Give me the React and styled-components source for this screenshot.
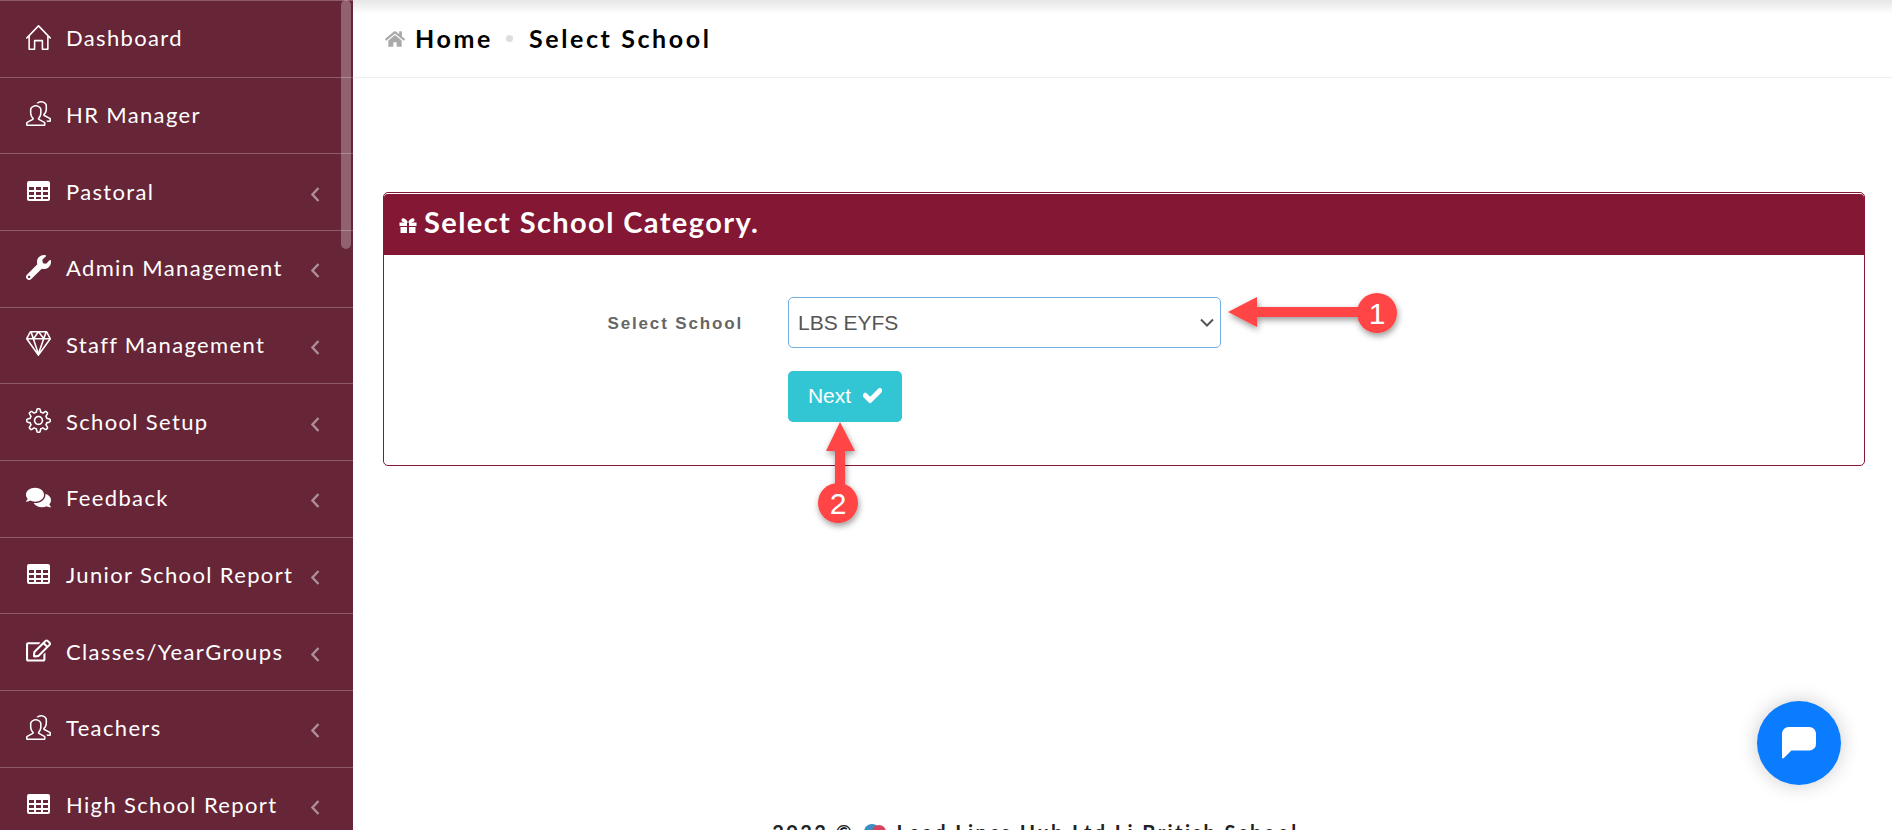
import React from "react";
import styled, { createGlobalStyle } from "styled-components";
import { FaWrench, FaRegEdit, FaComments, FaHome, FaCheck } from "react-icons/fa";
import { SlHome, SlPeople, SlDiamond, SlSettings } from "react-icons/sl";

const GlobalStyle = createGlobalStyle`
  html, body {
    margin: 0;
    height: 100%;
    overflow: hidden;
    background: #fff;
    font-family: "Lato", "Liberation Sans", sans-serif;
  }
  * { box-sizing: border-box; }
`;

const Page = styled.div`
  display: flex;
  height: 830px;
  width: 1892px;
  overflow: hidden;
`;

const Sidebar = styled.nav`
  position: relative;
  flex: 0 0 353px;
  height: 830px;
  overflow: hidden;
  background: #672538;
`;

const ScrollThumb = styled.div`
  position: absolute;
  top: 0;
  right: 2px;
  width: 10px;
  height: 249px;
  border-radius: 5px;
  background: rgba(255, 255, 255, 0.28);
`;

const MenuRow = styled.a`
  display: flex;
  align-items: center;
  height: 76.67px;
  padding: 0 33px 0 25px;
  border-top: 1px solid rgba(255, 255, 255, 0.25);
  color: #fff;
  font-size: 22px;
  letter-spacing: 1.35px;
  white-space: nowrap;
`;

const MenuIcon = styled.span`
  display: inline-flex;
  justify-content: center;
  flex: 0 0 26px;
  margin: -3px 15px 0 0;
  font-size: 25px;
`;

const MenuLabel = styled.span`
  flex: 1;
  margin-top: -2px;
`;

const Caret = styled.svg`
  width: 9px;
  height: 15px;
  margin-top: 4px;
  fill: none;
  stroke: #ab8e97;
  stroke-width: 2.4;
`;

const Main = styled.main`
  flex: 1;
  display: flex;
  flex-direction: column;
  min-width: 0;
  height: 830px;
  overflow: hidden;
`;

const TopBar = styled.header`
  flex: 0 0 78px;
  display: flex;
  align-items: center;
  padding: 0 27px 0 32px;
  border-bottom: 1px solid #eee;
  background: linear-gradient(#e6e6e6 0, #fff 14px);
`;

const Crumb = styled.span`
  margin-top: -2px;
  color: #000;
  font-size: 25px;
  font-weight: 700;
  letter-spacing: 2.6px;
`;

const HomeIcon = styled(FaHome)`
  color: #aaa;
  font-size: 20px;
  margin-right: 10px;
`;

const Dot = styled.span`
  width: 7px;
  height: 7px;
  margin: 0 16px 0 13px;
  border-radius: 50%;
  background: #ddd;
`;

const Content = styled.section`
  flex: 0 0 auto;
  padding: 114px 27px 0 30px;
`;

const Card = styled.div`
  height: 274px;
  border: 1px solid #841734;
  border-radius: 5px;
`;

const CardHead = styled.h2`
  display: flex;
  align-items: center;
  height: 61px;
  margin: 1px 0 0;
  padding: 0 15px 6px;
  background: #841734;
  color: #fff;
  font-size: 29px;
  font-weight: 700;
  letter-spacing: 1.4px;
  border-radius: 4px 4px 0 0;
`;

const GiftIcon = styled.svg`
  width: 18px;
  height: 15px;
  margin: 8px 7px 0 0;
  fill: #fff;
`;

const FormRow = styled.div`
  display: flex;
  align-items: center;
  margin-top: ${(p) => p.$top}px;
`;

const FieldLabel = styled.label`
  flex: 0 0 359px;
  margin-top: 2px;
  text-align: right;
  color: #666;
  font-family: "Liberation Sans", sans-serif;
  font-size: 17px;
  font-weight: 700;
  letter-spacing: 1.85px;
`;

const SelectWrap = styled.div`
  position: relative;
  width: 433px;
  margin-left: 45px;
`;

const SelectBox = styled.select`
  display: block;
  width: 100%;
  height: 51px;
  padding: 0 30px 0 9px;
  appearance: none;
  border: 1px solid #74afe0;
  border-radius: 5px;
  background: #fff;
  color: #555;
  font-family: "Liberation Sans", sans-serif;
  font-size: 21px;
`;

const SelectCaret = styled.svg`
  position: absolute;
  right: 7px;
  top: 21px;
  width: 14px;
  height: 9px;
  fill: none;
  stroke: #555;
  stroke-width: 2;
  pointer-events: none;
`;

const NextButton = styled.button`
  display: inline-flex;
  align-items: center;
  justify-content: center;
  width: 114px;
  height: 51px;
  margin-left: 404px;
  padding: 0 0 2px;
  border: 0;
  border-radius: 5px;
  background: #32c6d4;
  color: #fff;
  font-family: "Liberation Sans", sans-serif;
  font-size: 21px;
`;

const CheckIcon = styled(FaCheck)`
  font-size: 19px;
  margin-left: 12px;
  stroke: currentColor;
  stroke-width: 30;
`;

const Footer = styled.footer`
  flex: 0 0 auto;
  display: flex;
  align-items: center;
  justify-content: center;
  gap: 10px;
  margin-top: 354px;
  padding-right: 174px;
  color: #222;
  font-size: 20px;
  font-weight: 700;
  letter-spacing: 2.4px;
  white-space: nowrap;
`;

const Callout = styled.svg`
  position: absolute;
  left: 0;
  top: 0;
  width: 1892px;
  height: 830px;
  pointer-events: none;
  overflow: visible;
`;

const CalloutText = styled.text`
  fill: #fff;
  font-family: "Liberation Sans", sans-serif;
  font-size: 30px;
  text-anchor: middle;
`;

const ChatBubble = styled.button`
  position: absolute;
  left: 1757px;
  top: 701px;
  width: 84px;
  height: 84px;
  display: flex;
  align-items: center;
  justify-content: center;
  border: 0;
  border-radius: 50%;
  background: #0a7cff;
  box-shadow: 0 0 20px rgba(0, 0, 0, 0.2);
`;

// font awesome 4 style table, three columns by three rows
const TableGlyph = () => (
  <svg width="23" height="20" viewBox="0 0 23 20" fill="currentColor">
    <path
      fillRule="evenodd"
      d="M2 0 H21 A2 2 0 0 1 23 2 V18 A2 2 0 0 1 21 20 H2 A2 2 0 0 1 0 18 V2 A2 2 0 0 1 2 0 Z
         M2 6 V9 H7 V6 Z M9 6 V9 H14 V6 Z M16 6 V9 H21 V6 Z
         M2 11 V14 H7 V11 Z M9 11 V14 H14 V11 Z M16 11 V14 H21 V11 Z
         M2 16 V18 H7 V16 Z M9 16 V18 H14 V16 Z M16 16 V18 H21 V16 Z"
    />
  </svg>
);

const menu = [
  { label: "Dashboard", icon: SlHome },
  { label: "HR Manager", icon: SlPeople },
  { label: "Pastoral", icon: TableGlyph, caret: true },
  { label: "Admin Management", icon: FaWrench, caret: true },
  { label: "Staff Management", icon: SlDiamond, caret: true },
  { label: "School Setup", icon: SlSettings, caret: true },
  { label: "Feedback", icon: FaComments, caret: true },
  { label: "Junior School Report", icon: TableGlyph, caret: true },
  { label: "Classes/YearGroups", icon: FaRegEdit, caret: true },
  { label: "Teachers", icon: SlPeople, caret: true },
  { label: "High School Report", icon: TableGlyph, caret: true },
];

export default function App() {
  return (
    <Page>
      <GlobalStyle />
      <Sidebar>
        {menu.map(({ label, icon: Icon, caret }) => (
          <MenuRow key={label}>
            <MenuIcon>
              <Icon />
            </MenuIcon>
            <MenuLabel>{label}</MenuLabel>
            {caret && (
              <Caret viewBox="0 0 9 15">
                <path d="M7.5 1 L1.5 7.5 L7.5 14" />
              </Caret>
            )}
          </MenuRow>
        ))}
        <ScrollThumb />
      </Sidebar>
      <Main>
        <TopBar>
          <HomeIcon />
          <Crumb>Home</Crumb>
          <Dot />
          <Crumb>Select School</Crumb>
        </TopBar>
        <Content>
          <Card>
            <CardHead>
              <GiftIcon viewBox="0 0 18 15">
                <path
                  fillRule="evenodd"
                  d="M0.5 4.5 H8 V8 H0.5 Z M10 4.5 H17.5 V8 H10 Z M1.5 9 H8 V15 H1.5 Z M10 9 H16.5 V15 H10 Z
                     M9 4.5 C5 4.5 2.5 4 2.5 2 C2.5 -0.5 6.5 -0.5 9 4.5 Z M9 4.5 C11.5 -0.5 15.5 -0.5 15.5 2 C15.5 4 13 4.5 9 4.5 Z"
                />
              </GiftIcon>
              Select School Category.
            </CardHead>
            <FormRow $top={42}>
              <FieldLabel htmlFor="school">Select School</FieldLabel>
              <SelectWrap>
                <SelectBox id="school" defaultValue="LBS EYFS">
                  <option>LBS EYFS</option>
                </SelectBox>
                <SelectCaret viewBox="0 0 14 9">
                  <path d="M1 1.5 L7 7.5 L13 1.5" />
                </SelectCaret>
              </SelectWrap>
            </FormRow>
            <FormRow $top={23}>
              <NextButton>
                Next
                <CheckIcon />
              </NextButton>
            </FormRow>
          </Card>
        </Content>
        <Footer>
          2023 ©
          <svg width="22" height="22" viewBox="0 0 22 22">
            <circle cx="8" cy="11" r="8" fill="#3b8fc4" />
            <circle cx="15" cy="11" r="7" fill="#d8435f" />
          </svg>
          Lead Lincs Hub Ltd Li British School
        </Footer>
      </Main>
      <Callout viewBox="0 0 1892 830">
        <defs>
          <filter id="drop" x="-30%" y="-30%" width="160%" height="160%">
            <feDropShadow dx="1" dy="3" stdDeviation="3" floodColor="#000" floodOpacity="0.4" />
          </filter>
        </defs>
        <g filter="url(#drop)" fill="#ff4444">
          <path d="M1228 312 L1257 297 L1257 307 L1365 307 L1365 317 L1257 317 L1257 327 Z" />
          <circle cx="1377" cy="313" r="20" />
          <path d="M840 422 L826 451 L835 451 L835 490 L845 490 L845 451 L855 451 Z" />
          <circle cx="838" cy="503" r="20" />
        </g>
        <CalloutText x="1377" y="324">1</CalloutText>
        <CalloutText x="838" y="514">2</CalloutText>
      </Callout>
      <ChatBubble aria-label="Chat">
        <svg width="36" height="34" viewBox="0 0 38 36">
          <path d="M8 1 H30 A7 7 0 0 1 37 8 V19 A7 7 0 0 1 30 26 H11 L3 34 Q1 35 1 33 V8 A7 7 0 0 1 8 1 Z" fill="#fff" />
        </svg>
      </ChatBubble>
    </Page>
  );
}
